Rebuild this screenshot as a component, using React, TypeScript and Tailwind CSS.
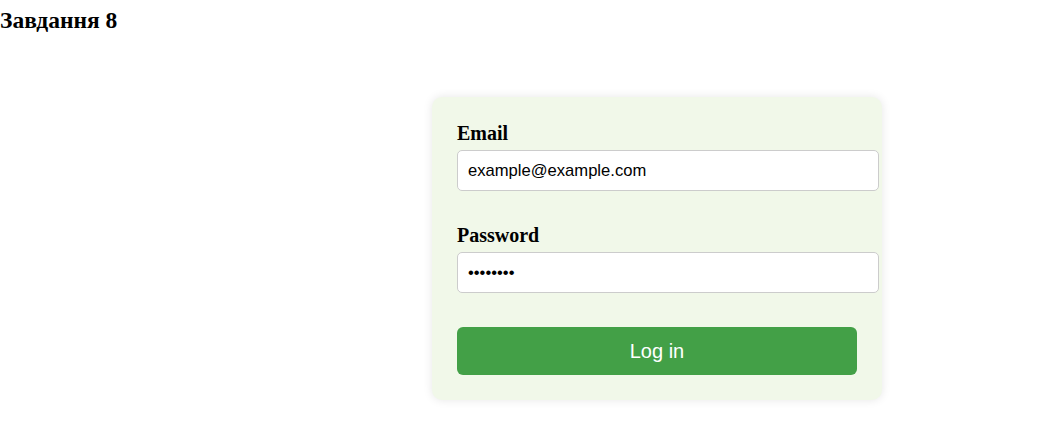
const serif = "font-['Liberation_Serif','Times_New_Roman',serif]";

export default function App() {
  return (
    <div className="min-h-screen bg-white text-black font-['Liberation_Serif','Times_New_Roman',serif]">
      <h2 className="mt-[7px] text-[23.5px] font-bold leading-[normal]">Завдання 8</h2>

      <form
        className="ml-[432px] mt-[63px] w-[450px] rounded-[10px] bg-[#f1f8e9] p-[25px] shadow-[0_0_10px_rgba(0,0,0,0.1)]"
        onSubmit={(e) => e.preventDefault()}
      >
        <label className={`block text-[20px] font-bold leading-[normal] ${serif}`}>Email</label>
        <input
          type="email"
          defaultValue="example@example.com"
          className="mt-[5px] box-content block h-[19px] w-[400px] rounded-[5px] border border-[#ccc] bg-white px-[10px] py-[10px] font-['Liberation_Sans',Arial,sans-serif] text-[16.6px] leading-[19px] outline-none"
        />

        <label className={`mt-[33px] block text-[20px] font-bold leading-[normal] ${serif}`}>Password</label>
        <input
          type="password"
          defaultValue="12345678"
          className="mt-[5px] box-content block h-[19px] w-[400px] rounded-[5px] border border-[#ccc] bg-white px-[10px] py-[10px] font-['Liberation_Sans',Arial,sans-serif] text-[16.6px] leading-[19px] outline-none"
        />

        <button
          type="submit"
          className="mt-[34px] block h-[48px] w-[400px] rounded-[6px] bg-[#43a047] font-['Liberation_Sans',Arial,sans-serif] text-[20px] text-white"
        >
          Log in
        </button>
      </form>
    </div>
  );
}
